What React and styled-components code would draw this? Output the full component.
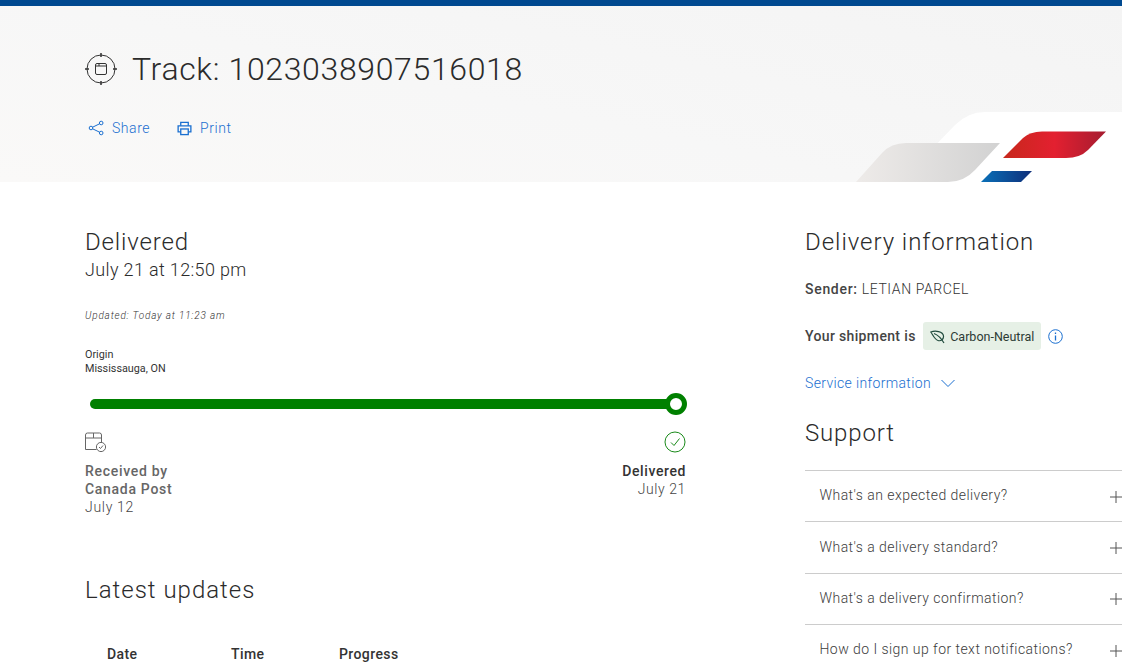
import React from 'react';
import styled, { createGlobalStyle } from 'styled-components';

const GlobalStyle = createGlobalStyle`
  html, body {
    margin: 0;
    padding: 0;
    height: 664px;
    overflow: hidden;
    background: #fff;
    font-family: Roboto, "Liberation Sans", sans-serif;
    color: #333;
  }
  * { box-sizing: border-box; }
`;

const Page = styled.div`
  width: 1122px;
  height: 664px;
  overflow: hidden;
  border-top: 6px solid #004990;
`;

const Header = styled.header`
  position: relative;
  height: 176px;
  padding: 39px 0 0 85px;
  background: linear-gradient(12deg, #faf9f8 0%, #f7f7f7 45%, #f4f4f4 100%);
`;

const TitleRow = styled.div`
  display: flex;
  align-items: center;
  gap: 15px;
  height: 48px;
`;

const Title = styled.h1`
  margin: 0;
  font-size: 32px;
  line-height: 48px;
  font-weight: 300;
  letter-spacing: 0.65px;
  color: #2b2b2b;
`;

const Actions = styled.div`
  display: flex;
  gap: 27px;
  margin-top: 25px;
  padding-left: 3px;
`;

const ActionLink = styled.a`
  display: flex;
  align-items: center;
  gap: 8px;
  font-size: 14px;
  line-height: 20px;
  font-weight: 300;
  letter-spacing: 0.55px;
  color: #1a6fd0;
`;

const Swoosh = styled.svg`
  position: absolute;
  right: 0;
  bottom: 0;
  width: 282px;
  height: 82px;
`;

const Main = styled.main`
  display: grid;
  grid-template-columns: 601px 317px;
  column-gap: 119px;
  padding: 0 0 0 85px;
`;

const LeftColumn = styled.section`
  padding-top: 45px;
`;

const RightColumn = styled.aside`
  padding-top: 45px;
`;

const Heading = styled.h2`
  margin: 0;
  font-size: 24px;
  line-height: 30px;
  font-weight: 300;
  letter-spacing: ${(p) => p.$spacing || '0.85px'};
  color: #2b2b2b;
`;

const StatusDate = styled.div`
  font-size: 18px;
  line-height: 26px;
  font-weight: 300;
  letter-spacing: 0.35px;
  color: #2b2b2b;
`;

const Updated = styled.div`
  margin-top: 26px;
  font-size: 10px;
  line-height: 14px;
  font-weight: 300;
  font-style: italic;
  letter-spacing: 0.82px;
  color: #333;
`;

const Origin = styled.div`
  margin-top: 25px;
  font-size: 10.8px;
  line-height: 14px;
  font-weight: 400;
  color: #333;
`;

const Track = styled.div`
  position: relative;
  height: 10px;
  margin: 23px 0 0 5px;
  width: 585px;
  border-radius: 5px;
  background: #008000;
`;

const TrackEnd = styled.span`
  position: absolute;
  right: -11.5px;
  top: -6px;
  width: 22px;
  height: 22px;
  border: 5.5px solid #008000;
  border-radius: 50%;
  background: #fff;
`;

const Milestones = styled.div`
  display: flex;
  justify-content: space-between;
  margin-top: 22px;
`;

const Milestone = styled.div`
  display: flex;
  flex-direction: column;
  align-items: ${(p) => (p.$end ? 'flex-end' : 'flex-start')};
  text-align: ${(p) => (p.$end ? 'right' : 'left')};
  font-size: 14px;
  line-height: 18px;
  letter-spacing: ${(p) => (p.$end ? '0.6px' : '0.7px')};
`;

const MilestoneIcon = styled.div`
  height: 22px;
  margin-bottom: 9px;
`;

const MilestoneName = styled.div`
  font-weight: 500;
  color: ${(p) => (p.$dark ? '#333' : '#666')};
`;

const MilestoneDate = styled.div`
  font-weight: 300;
  color: #444;
`;

const SectionHeading = styled(Heading)`
  margin-top: 59px;
`;

const UpdatesHead = styled.div`
  display: grid;
  grid-template-columns: 124px 108px 1fr;
  margin-top: 39px;
  padding-left: 22px;
  font-size: 14px;
  line-height: 20px;
  font-weight: 500;
  letter-spacing: 0.4px;
  color: #333;
`;

const Sender = styled.div`
  margin-top: 22px;
  font-size: 14px;
  line-height: 20px;
  letter-spacing: 0.6px;
  font-weight: 300;
  color: #333;
  b {
    font-weight: 500;
    letter-spacing: 0.7px;
    color: #444;
  }
`;

const ShipmentRow = styled.div`
  display: flex;
  align-items: center;
  margin-top: 23px;
  font-size: 14px;
  font-weight: 500;
  letter-spacing: 0.35px;
  color: #444;
`;

const Badge = styled.span`
  display: flex;
  align-items: center;
  gap: 5px;
  height: 28px;
  margin-left: 7.5px;
  padding: 0 7px;
  border-radius: 3px;
  background: #e6f0e6;
  font-size: 12.5px;
  font-weight: 400;
  letter-spacing: 0;
  color: #2c3b35;
`;

const InfoIcon = styled.svg`
  margin-left: 7px;
`;

const ServiceLink = styled.div`
  display: flex;
  align-items: center;
  gap: 10px;
  margin-top: 23px;
  font-size: 14px;
  line-height: 20px;
  font-weight: 300;
  letter-spacing: 0.35px;
  color: #1a6fd0;
`;

const SupportHeading = styled(Heading)`
  margin-top: 25px;
`;

const FaqList = styled.div`
  margin-top: 22px;
  border-top: 1px solid #ccc;
`;

const FaqRow = styled.div`
  display: flex;
  align-items: center;
  justify-content: space-between;
  height: 51.3px;
  padding: 0 0 1.5px 14.5px;
  border-bottom: 1px solid #ccc;
  font-size: 14px;
  font-weight: 300;
  letter-spacing: 0.45px;
  color: #3c3c3c;
`;

const Plus = styled.svg`
  margin-top: 2.5px;
`;

const faqs = [
  "What's an expected delivery?",
  "What's a delivery standard?",
  "What's a delivery confirmation?",
  'How do I sign up for text notifications?',
];

const App = () => {
  return (
    <Page>
      <GlobalStyle />
      <Header>
        <TitleRow>
          <svg width="32" height="32" viewBox="0 0 32 32" fill="none" stroke="#333" strokeWidth="1">
            <circle cx="16" cy="16" r="14" />
            <path d="M16 0v4M16 28v4M0 16h4M28 16h4" strokeWidth="1.5" />
            <rect x="10.5" y="10.5" width="11" height="11" rx="1.5" />
            <path d="M10.5 13h11M14 10.5V13" />
          </svg>
          <Title>Track: 1023038907516018</Title>
        </TitleRow>
        <Actions>
          <ActionLink>
            <svg width="16" height="16" viewBox="0 0 16 16" fill="none" stroke="#1a6fd0" strokeWidth="1">
              <circle cx="3" cy="8" r="1.8" />
              <circle cx="13.2" cy="3" r="1.8" />
              <circle cx="13.2" cy="13" r="1.8" />
              <path d="M4.6 7.2 11.6 3.8M4.6 8.8l7 3.4" />
            </svg>
            Share
          </ActionLink>
          <ActionLink>
            <svg width="15" height="15" viewBox="0 0 16 16" fill="none" stroke="#1a6fd0" strokeWidth="1.4">
              <path d="M4 5V1.5h8V5" />
              <path d="M4 11.5H1.2V5.2h13.6v6.3H12" />
              <rect x="4" y="8.5" width="8" height="6" />
            </svg>
            Print
          </ActionLink>
        </Actions>
        <Swoosh viewBox="840 100 282 82">
          <defs>
            <linearGradient id="grayFade" x1="0" x2="1" y1="0" y2="0">
              <stop offset="0" stopColor="#eeebe9" />
              <stop offset="1" stopColor="#d2d2d2" />
            </linearGradient>
            <linearGradient id="redFade" x1="0" x2="1" y1="0" y2="0">
              <stop offset="0" stopColor="#c7281c" />
              <stop offset="0.5" stopColor="#e32030" />
              <stop offset="1" stopColor="#a51c30" />
            </linearGradient>
            <linearGradient id="blueFade" x1="0" x2="1" y1="0" y2="0">
              <stop offset="0" stopColor="#0a70b8" />
              <stop offset="1" stopColor="#0f2f7a" />
            </linearGradient>
          </defs>
          <path d="M900 182 L955 125 Q968 112 985 112 H1122 V182 Z" fill="#fff" />
          <path d="M856 182 L882 153 Q891 143 906 143 H1000 L975 170 Q964 182 948 182 Z" fill="url(#grayFade)" />
          <path d="M1003 158 L1023 138 Q1030 131.5 1042 131.5 H1106 L1088 150 Q1080 158 1066 158 Z" fill="url(#redFade)" />
          <path d="M981 182 L992 171 H1032 L1021 182 Z" fill="url(#blueFade)" />
        </Swoosh>
      </Header>
      <Main>
        <LeftColumn>
          <Heading>Delivered</Heading>
          <StatusDate>July 21 at 12:50 pm</StatusDate>
          <Updated>Updated: Today at 11:23 am</Updated>
          <Origin>
            Origin
            <br />
            Mississauga, ON
          </Origin>
          <Track>
            <TrackEnd />
          </Track>
          <Milestones>
            <Milestone>
              <MilestoneIcon>
                <svg width="22" height="22" viewBox="0 0 22 22" fill="none" stroke="#666" strokeWidth="1">
                  <path d="M11.5 18.5H.5V4Q.5 2 2.5 2h12Q16.5 2 16.5 4V11" />
                  <path d="M.5 7h16M8.5 2v5" />
                  <circle cx="16" cy="16" r="4.6" />
                  <path d="M14 16l1.5 1.5 2.5-3" />
                </svg>
              </MilestoneIcon>
              <MilestoneName>
                Received by
                <br />
                Canada Post
              </MilestoneName>
              <MilestoneDate>July 12</MilestoneDate>
            </Milestone>
            <Milestone $end>
              <MilestoneIcon>
                <svg width="22" height="22" viewBox="0 0 22 22" fill="none" stroke="#1a8a1a" strokeWidth="1">
                  <circle cx="11" cy="11" r="10" />
                  <path d="M7 11.5l3 3 5.5-7" />
                </svg>
              </MilestoneIcon>
              <MilestoneName $dark>Delivered</MilestoneName>
              <MilestoneDate>July 21</MilestoneDate>
            </Milestone>
          </Milestones>
          <SectionHeading $spacing="1px">Latest updates</SectionHeading>
          <UpdatesHead>
            <span>Date</span>
            <span>Time</span>
            <span>Progress</span>
          </UpdatesHead>
        </LeftColumn>
        <RightColumn>
          <Heading $spacing="0.95px">Delivery information</Heading>
          <Sender>
            <b>Sender:</b> LETIAN PARCEL
          </Sender>
          <ShipmentRow>
            Your shipment is
            <Badge>
              <svg width="15" height="15" viewBox="0 0 15 15" fill="none" stroke="#1f4a3c" strokeWidth="1.2">
                <path d="M.8 3C5 1.5 13 2 13.5 7 13.8 10 11 12.5 8 11.5 4.5 10.5 3 6 .8 3z" />
                <path d="M4 4.5C8 6 11 9 14 14" />
              </svg>
              Carbon-Neutral
            </Badge>
            <InfoIcon width="15" height="15" viewBox="0 0 15 15" fill="none" stroke="#1a6fd0">
              <circle cx="7.5" cy="7.5" r="6.8" />
              <path d="M7.5 6.5v5M7.5 3.5V5" strokeWidth="1.3" />
            </InfoIcon>
          </ShipmentRow>
          <ServiceLink>
            Service information
            <svg width="14" height="9" viewBox="0 0 14 9" fill="none" stroke="#1a6fd0">
              <path d="M.5 1l6.5 6.5L13.5 1" />
            </svg>
          </ServiceLink>
          <SupportHeading>Support</SupportHeading>
          <FaqList>
            {faqs.map((question) => (
              <FaqRow key={question}>
                {question}
                <Plus width="12" height="12" viewBox="0 0 12 12" stroke="#555">
                  <path d="M6 0v12M0 6h12" />
                </Plus>
              </FaqRow>
            ))}
          </FaqList>
        </RightColumn>
      </Main>
    </Page>
  );
};

export default App;
